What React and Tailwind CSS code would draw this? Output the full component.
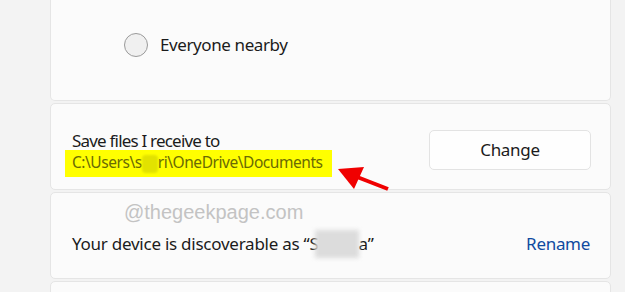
export default function App() {
  const font = { fontFamily: '"Segoe UI", "Noto Sans", sans-serif' };
  return (
    <div
      className="relative w-[625px] h-[292px] overflow-hidden bg-[#f3f3f3] pl-[50px] pr-[14px] flex flex-col gap-[2px]"
      style={font}
    >
      {/* Card 1 */}
      <div className="h-[101px] shrink-0 bg-[#fbfbfb] border border-t-0 border-[#e5e5e5] rounded-b-[5px] flex items-center pl-[73px] pt-[10px] pb-[20px]">
        <div className="w-[24px] h-[24px] rounded-full border-[1.5px] border-[#9a9a9a] bg-[#f0f0f0]"></div>
        <span className="ml-[12px] text-[17px] tracking-[-0.4px] text-[#1b1b1b]">Everyone nearby</span>
      </div>

      {/* Card 2 */}
      <div className="h-[87px] shrink-0 bg-[#fbfbfb] border border-[#e5e5e5] rounded-[5px] flex items-center justify-between pl-[21px] pr-[19px]">
        <div className="flex flex-col pt-[14px]">
          <span className="text-[17px] leading-[22px] tracking-[-0.8px] text-[#1b1b1b]">Save files I receive to</span>
          <span className="-ml-[7px] mt-[-2px] w-[267px] h-[27px] bg-[#ffff00] pl-[7px] text-[15.5px] leading-[25px] tracking-[-0.45px] whitespace-nowrap text-[#6a6a05]">
            C:\Users\s
            <span className="inline-block w-[16px] h-[18px] align-middle bg-[#e2e200] rounded-[4px] blur-[1px]"></span>
            ri\OneDrive\Documents
          </span>
        </div>
        <button className="w-[162px] h-[40px] mt-[7px] bg-[#fefefe] border border-[#e3e3e3] rounded-[5px] text-[17px] tracking-[-0.3px] text-[#1b1b1b]">
          Change
        </button>
      </div>

      {/* Card 3 */}
      <div className="relative h-[87px] shrink-0 bg-[#fbfbfb] border border-[#e5e5e5] rounded-[5px] flex items-center justify-between pl-[21px] pr-[20px]">
        <span className="pt-[16px] text-[17px] tracking-[-0.25px] text-[#1b1b1b] flex items-center whitespace-pre">
          Your device is discoverable as “S
          <span className="inline-block w-[44px] h-[28px] -ml-[4px] bg-[#dcdcdc] blur-[2px]"></span>
          a”
        </span>
        <span className="pt-[16px] text-[17px] tracking-[-0.3px] text-[#0f4aa0]">Rename</span>
        <span
          className="absolute left-[73px] top-[4px] text-[20px] text-[#c3c3c3]"
          style={{ fontFamily: '"Liberation Sans", Arial, sans-serif' }}
        >
          @thegeekpage.com
        </span>
      </div>

      {/* Card 4 */}
      <div className="h-[40px] shrink-0 bg-[#fbfbfb] border border-[#e5e5e5] rounded-[5px]"></div>

      {/* Red arrow */}
      <svg className="absolute left-0 top-0" width="625" height="292" viewBox="0 0 625 292">
        <line x1="388" y1="189" x2="352" y2="175" stroke="#f00000" strokeWidth="4" />
        <polygon points="338,169 364,167 354,189" fill="#f00000" />
      </svg>
    </div>
  );
}
